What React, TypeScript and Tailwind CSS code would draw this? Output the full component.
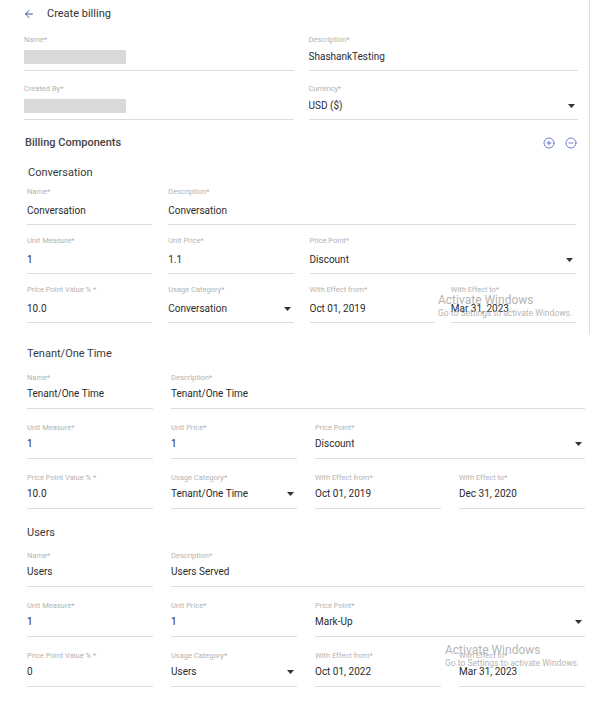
import React from 'react';
import { ArrowLeft, CirclePlus, CircleMinus } from 'lucide-react';

type Space = 'top' | 'comp' | 'low';

interface FieldProps {
  label: string;
  value?: string;
  masked?: boolean;
  select?: boolean;
  space: Space;
  className?: string;
}

// spacing between label and value differs a bit between the two captures
const valueGap: Record<Space, string> = {
  top: 'mt-[5px] pb-[6px]',
  comp: 'mt-[7px] pb-[6px]',
  low: 'mt-[4px] pb-[7px]',
};

const Caret = () => (
  <svg width="7" height="4" viewBox="0 0 7 4" className="shrink-0 mr-[3px]">
    <polygon points="0,0 7,0 3.5,4" fill="#333" />
  </svg>
);

const Field: React.FC<FieldProps> = ({ label, value, masked, select, space, className }) => (
  <div className={`flex flex-col min-w-0 ${className ?? ''}`}>
    <div className="h-[10px] leading-[10px] text-[7.5px] text-[#b3b3b3]">{label}</div>
    <div className={`${valueGap[space]} border-b border-[#dcdcdc] flex items-center justify-between`}>
      {masked ? (
        <div className="h-[14px] w-[102px] bg-[#d9d9d9]" />
      ) : (
        <span className="h-[14px] leading-[14px] text-[10px] text-[#2b2b2b] truncate">{value}</span>
      )}
      {select && <Caret />}
    </div>
  </div>
);

interface BillingComponent {
  title: string;
  name: string;
  description: string;
  unitMeasure: string;
  unitPrice: string;
  pricePoint: string;
  ppValue: string;
  usage: string;
  from: string;
  to: string;
}

const ComponentBlock: React.FC<{ item: BillingComponent; space: Space; gridClass: string; headClass: string; bodyClass: string }> = ({
  item,
  space,
  gridClass,
  headClass,
  bodyClass,
}) => (
  <div className={headClass}>
    <div className="h-[16px] leading-[16px] text-[11px] text-[#3a3a3a]">{item.title}</div>
    <div className={`grid grid-cols-4 ${gridClass} ${bodyClass}`}>
      <Field space={space} label="Name*" value={item.name} />
      <Field space={space} label="Description*" value={item.description} className="col-span-3" />
      <Field space={space} label="Unit Measure*" value={item.unitMeasure} />
      <Field space={space} label="Unit Price*" value={item.unitPrice} />
      <Field space={space} label="Price Point*" value={item.pricePoint} select className="col-span-2" />
      <Field space={space} label="Price Point Value % *" value={item.ppValue} />
      <Field space={space} label="Usage Category*" value={item.usage} select />
      <Field space={space} label="With Effect from*" value={item.from} />
      <Field space={space} label="With Effect to*" value={item.to} />
    </div>
  </div>
);

const conversation: BillingComponent = {
  title: 'Conversation',
  name: 'Conversation',
  description: 'Conversation',
  unitMeasure: '1',
  unitPrice: '1.1',
  pricePoint: 'Discount',
  ppValue: '10.0',
  usage: 'Conversation',
  from: 'Oct 01, 2019',
  to: 'Mar 31, 2023',
};

const tenant: BillingComponent = {
  title: 'Tenant/One Time',
  name: 'Tenant/One Time',
  description: 'Tenant/One Time',
  unitMeasure: '1',
  unitPrice: '1',
  pricePoint: 'Discount',
  ppValue: '10.0',
  usage: 'Tenant/One Time',
  from: 'Oct 01, 2019',
  to: 'Dec 31, 2020',
};

const users: BillingComponent = {
  title: 'Users',
  name: 'Users',
  description: 'Users Served',
  unitMeasure: '1',
  unitPrice: '1',
  pricePoint: 'Mark-Up',
  ppValue: '0',
  usage: 'Users',
  from: 'Oct 01, 2022',
  to: 'Mar 31, 2023',
};

const Watermark: React.FC<{ className: string }> = ({ className }) => (
  <div className={`absolute pointer-events-none text-[#a0a0a0]/80 ${className}`}>
    <div className="text-[12px] leading-[14px]">Activate Windows</div>
    <div className="text-[8.5px] leading-[11px] mt-[1px]">Go to Settings to activate Windows.</div>
  </div>
);

export default function App() {
  return (
    <div className="relative w-[604px] h-[720px] overflow-hidden bg-white font-['Roboto',sans-serif]">
      {/* first capture */}
      <div className="h-[334px] w-[590px] border-r border-[#dcdcdc]">
        <div className="h-[28px] flex items-center pl-[23px]">
          <ArrowLeft size={12} strokeWidth={2} className="text-[#3f51b5]" />
          <span className="ml-[12px] text-[11px] text-[#333]">Create billing</span>
        </div>

        <div className="mt-[7px] pl-[24px] w-[578px] grid grid-cols-2 gap-x-[15px] gap-y-[13px]">
          <Field space="top" label="Name*" masked />
          <Field space="top" label="Description*" value="ShashankTesting" />
          <Field space="top" label="Created By*" masked />
          <Field space="top" label="Currency*" value="USD ($)" select />
        </div>

        <div className="mt-[15px] pl-[25px] w-[577px] h-[16px] flex items-center justify-between">
          <span className="text-[11px] font-medium text-[#444]">Billing Components</span>
          <div className="flex items-center gap-[10px] text-[#4a5bbf]">
            <CirclePlus size={12} strokeWidth={1.6} />
            <CircleMinus size={12} strokeWidth={1.6} />
          </div>
        </div>

        <ComponentBlock
          item={conversation}
          space="comp"
          headClass="mt-[14px] pl-[28px] w-[576px]"
          bodyClass="-ml-[1px] mt-[6px]"
          gridClass="gap-x-[16px] gap-y-[11px]"
        />
      </div>

      {/* second capture */}
      <div className="pl-[27px] w-[585px]">
        <ComponentBlock
          item={tenant}
          space="low"
          headClass="mt-[12px]"
          bodyClass="mt-[11px]"
          gridClass="gap-x-[18px] gap-y-[14px]"
        />
        <ComponentBlock
          item={users}
          space="low"
          headClass="mt-[16px]"
          bodyClass="mt-[10px]"
          gridClass="gap-x-[18px] gap-y-[14px]"
        />
      </div>

      <Watermark className="left-[438px] top-[293px]" />
      <Watermark className="left-[445px] top-[643px]" />
    </div>
  );
}
